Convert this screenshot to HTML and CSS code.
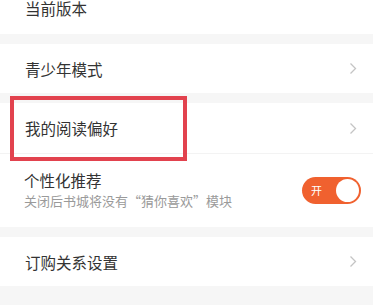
FILE: index.html
```html
<!DOCTYPE html>
<html lang="zh-CN">
<head>
<meta charset="utf-8">
<link rel="stylesheet" href="styles.css">
</head>
<body>
<div class="page">
  <div class="list">
    <div class="row row-top"><span class="label label-top">当前版本</span></div>
    <div class="band"></div>
    <div class="row row-a"><span class="label">青少年模式</span>
      <svg class="chev" width="8" height="13" viewBox="0 0 8 13"><polyline points="1.5,1.5 6.5,6.5 1.5,11.5" fill="none" stroke="#c4c4c4" stroke-width="1.3"/></svg>
    </div>
    <div class="band"></div>
    <div class="row row-b"><span class="label">我的阅读偏好</span>
      <svg class="chev" width="8" height="13" viewBox="0 0 8 13"><polyline points="1.5,1.5 6.5,6.5 1.5,11.5" fill="none" stroke="#c4c4c4" stroke-width="1.3"/></svg>
    </div>
    <div class="row row-c">
      <div class="texts">
        <span class="label">个性化推荐</span>
        <span class="sub">关闭后书城将没有“猜你喜欢”模块</span>
      </div>
      <div class="toggle"><span class="toggle-text">开</span><span class="knob"></span></div>
    </div>
    <div class="band"></div>
    <div class="row row-d"><span class="label">订购关系设置</span>
      <svg class="chev" width="8" height="13" viewBox="0 0 8 13"><polyline points="1.5,1.5 6.5,6.5 1.5,11.5" fill="none" stroke="#c4c4c4" stroke-width="1.3"/></svg>
    </div>
    <div class="band band-end"></div>
  </div>
  <div class="highlight"></div>
</div>
</body>
</html>
```

FILE: styles.css
```css
html, body {
  margin: 0;
  padding: 0;
  background: #ffffff;
  overflow: hidden;
}
body {
  font-family: "Noto Sans CJK SC", "Noto Sans", sans-serif;
  width: 373px;
  height: 305px;
}
.page {
  position: relative;
  width: 373px;
  height: 305px;
}
.list {
  display: flex;
  flex-direction: column;
}
.row {
  display: flex;
  align-items: center;
  justify-content: space-between;
  padding: 0 16px 0 25px;
  background: #ffffff;
}
.row-top {
  height: 34px;
  align-items: flex-start;
}
.row-a { height: 49px; }
.row-b { height: 50px; border-bottom: 1px solid #f3f3f3; }
.row-c { height: 73px; padding-right: 12px; padding-left: 24px; }
.row-d { height: 49px; }
.band {
  height: 10px;
  background: #f6f6f6;
}
.band-end { height: 30px; }
.label {
  font-size: 15.5px;
  color: #333333;
  line-height: 20px;
}
.label-top {
  line-height: 17px;
}
.texts {
  display: flex;
  flex-direction: column;
  gap: 2px;
  margin-top: -1px;
}
.sub {
  font-size: 13px;
  color: #9a9a9a;
  line-height: 18px;
}
.chev {
  display: block;
}
.toggle {
  width: 59px;
  height: 27px;
  border-radius: 14px;
  background: #f0612f;
  display: flex;
  align-items: center;
  justify-content: space-between;
  padding: 0 2px 0 9px;
  box-sizing: border-box;
  margin-top: -1px;
}
.toggle-text {
  color: #ffffff;
  font-size: 11px;
  line-height: 12px;
}
.knob {
  width: 23px;
  height: 23px;
  border-radius: 50%;
  background: #ffffff;
}
.highlight {
  position: absolute;
  left: 10px;
  top: 96px;
  width: 177px;
  height: 65px;
  border: 4.5px solid #e2424e;
  box-sizing: border-box;
}
```
